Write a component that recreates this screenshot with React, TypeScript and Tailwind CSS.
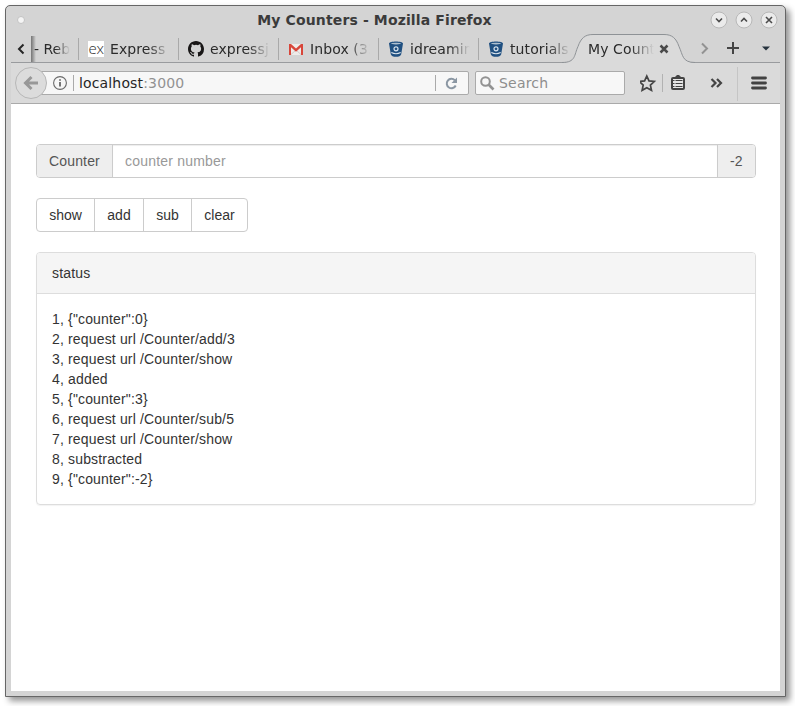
import React from "react";

const LINES = [
  '1, {"counter":0}',
  "2, request url /Counter/add/3",
  "3, request url /Counter/show",
  "4, added",
  '5, {"counter":3}',
  "6, request url /Counter/sub/5",
  "7, request url /Counter/show",
  "8, substracted",
  '9, {"counter":-2}',
];

const FADE =
  "overflow-hidden whitespace-nowrap tracking-[0.1px] [mask-image:linear-gradient(to_right,black_65%,transparent)]";

function WindowButton({ d }: { d: string }) {
  return (
    <svg width="18" height="18" viewBox="0 0 18 18" fill="none">
      <circle cx="9" cy="9" r="8" fill="#ebebeb" stroke="#b8b8b8" />
      <path d={d} stroke="#4a4a4a" strokeWidth="1.6" />
    </svg>
  );
}

function GithubIcon() {
  return (
    <svg width="16" height="16" viewBox="0 0 16 16" fill="#191717">
      <path d="M8 0C3.58 0 0 3.58 0 8c0 3.54 2.29 6.53 5.47 7.59.4.07.55-.17.55-.38 0-.19-.01-.82-.01-1.49-2.01.37-2.53-.49-2.69-.94-.09-.23-.48-.94-.82-1.13-.28-.15-.68-.52-.01-.53.63-.01 1.08.58 1.23.82.72 1.21 1.87.87 2.33.66.07-.52.28-.87.51-1.07-1.78-.2-3.64-.89-3.64-3.95 0-.87.31-1.59.82-2.15-.08-.2-.36-1.02.08-2.12 0 0 .67-.21 2.2.82a7.6 7.6 0 0 1 4 0c1.53-1.04 2.2-.82 2.2-.82.44 1.1.16 1.92.08 2.12.51.56.82 1.27.82 2.15 0 3.07-1.87 3.75-3.65 3.95.29.25.54.73.54 1.48 0 1.07-.01 1.93-.01 2.2 0 .21.15.46.55.38A8.01 8.01 0 0 0 16 8c0-4.42-3.58-8-8-8z" />
    </svg>
  );
}

function GmailIcon() {
  return (
    <svg width="16" height="16" viewBox="0 0 16 16" fill="none">
      <path d="M1 3h14v11H1z" fill="#eeebe9" />
      <path d="M3 13.500L8 9l5 4.500" stroke="#cfcac8" />
      <path d="M1 3h2l5 4.500L13 3h2v11h-2V6.300L8 10.800 3 6.300V14H1z" fill="#d8463a" />
    </svg>
  );
}

function BitbucketIcon() {
  return (
    <svg width="16" height="16" viewBox="0 0 16 16" fill="none">
      <path d="M1 2.500C1 -.2 15 -.2 15 2.500L13.200 13.300c-.4 3.400-10 3.400-10.400 0z" fill="#205081" />
      <ellipse cx="8" cy="2.600" rx="5" ry=".8" fill="#aebfce" />
      <circle cx="8" cy="7.800" r="2" stroke="#d9e3ec" strokeWidth="1.200" />
      <path d="M3.300 11.600q4.700 2.400 9.400 0" stroke="#d9e3ec" strokeWidth="1.100" />
    </svg>
  );
}

function Tab({ icon, label }: { icon: React.ReactNode; label: string }) {
  return (
    <div className="flex h-[22px] w-[100px] shrink-0 items-center border-l border-[#a9a9a9] pl-[9px]">
      <span className="flex size-4 shrink-0">{icon}</span>
      <span className={"ml-1.5 w-[60px] " + FADE}>{label}</span>
    </div>
  );
}

function TitleBar() {
  return (
    <header className="grid h-7 grid-cols-[65px_1fr_65px] items-center">
      <svg className="ml-1.5" width="8" height="8" viewBox="0 0 8 8">
        <circle cx="4" cy="4" r="3.500" fill="#f5f5f5" stroke="#c2c2c2" />
      </svg>
      <h1 className="-ml-[42px] pt-px text-center text-[14px] font-bold tracking-[0.13px] text-[#3b3b3b]">
        My Counters - Mozilla Firefox
      </h1>
      <div className="-ml-[5px] flex gap-[7px]">
        <WindowButton d="M6 7.500l3 3 3-3" />
        <WindowButton d="M6 10.500l3-3 3 3" />
        <WindowButton d="M6 6l6 6M12 6l-6 6" />
      </div>
    </header>
  );
}

function TabBar() {
  return (
    <nav className="flex h-[29px] items-center border-b border-[#999b9e] pt-0.5 text-[14px] text-[#2b2b2b]">
      <div className="flex h-full w-5 shrink-0 items-center justify-center">
        <svg width="8" height="12" viewBox="0 0 8 12" fill="none">
          <path d="M6.500 1.500L2 6l4.500 4.500" stroke="#262626" strokeWidth="2" />
        </svg>
      </div>
      <div className="h-full w-[5px] shrink-0 bg-linear-to-r from-[#747474] to-transparent" />
      <div className="w-[42px] shrink-0">
        <div className="-ml-0.5 w-[36px] whitespace-nowrap [mask-image:linear-gradient(to_right,black_60%,transparent)]">
          - Reb
        </div>
      </div>
      <Tab
        icon={
          <span className="flex size-4 items-center justify-center bg-white pb-0.5 font-['Open_Sans',sans-serif] text-[15px] font-light leading-none tracking-[-0.3px]">
            ex
          </span>
        }
        label="Express"
      />
      <Tab icon={<GithubIcon />} label="expressj" />
      <Tab icon={<GmailIcon />} label="Inbox (33" />
      <Tab icon={<BitbucketIcon />} label="idreamin" />
      <Tab icon={<BitbucketIcon />} label="tutorials" />
      <div className="relative -ml-[16px] -mt-0.5 flex h-[29px] w-[134px] shrink-0 items-center self-start pt-px">
        <svg className="absolute left-0 top-0" width="134" height="30" viewBox="0 0 134 30" fill="none">
          <path
            d="M0 28.500C14 28.500 12 21 16 12.500C19 4 23 .5 31 .5H102C110 .5 114 4 117 12.500C121 21 120 28.500 133 28.500V30H0z"
            fill="#dadada"
          />
          <path
            d="M0 28.500C14 28.500 12 21 16 12.500C19 4 23 .5 31 .5H102C110 .5 114 4 117 12.500C121 21 120 28.500 133 28.500"
            stroke="#8e9296"
          />
        </svg>
        <span className={"relative ml-[26px] w-[66px] " + FADE}>My Count</span>
        <svg className="relative ml-[5px]" width="10" height="10" viewBox="0 0 10 10">
          <path d="M1.500 1.500l7 7M8.500 1.500l-7 7" stroke="#4a4a4a" strokeWidth="2.500" />
        </svg>
      </div>
      <svg className="-mt-0.5 ml-[4px] shrink-0" width="80" height="16" viewBox="700 0 80 16" fill="none">
        <path d="M702 3.500l5 5-5 5" stroke="#929292" strokeWidth="2" />
        <path d="M727 8h12M733 2v12" stroke="#444" strokeWidth="2" />
        <path d="M762 6.500h8l-4 4z" fill="#26333e" />
      </svg>
    </nav>
  );
}

function Toolbar() {
  return (
    <div className="flex h-[41px] items-center border-b border-[#aaa] bg-[#dadada] text-[14px]">
      <div className="relative z-10 ml-1 flex size-8 shrink-0 items-center justify-center rounded-full border border-[#b7b7b7] bg-[#dcdcdc]">
        <svg width="16" height="16" viewBox="0 0 16 16" fill="none">
          <path d="M15 8H3M8.500 2L2.500 8l6 6" stroke="#989898" strokeWidth="3" />
        </svg>
      </div>
      <div className="-ml-2 flex h-6 w-[430px] shrink-0 items-center rounded-r-[2px] border border-[#aaa] bg-[#f7f7f7]">
        <svg className="ml-[13px]" width="14" height="14" viewBox="0 0 14 14" fill="none">
          <circle cx="7" cy="7" r="6.400" stroke="#6a6a6a" strokeWidth="1.100" />
          <path d="M7 6v4.500M7 3.200v1.600" stroke="#555" strokeWidth="1.600" />
        </svg>
        <span className="ml-1.5 h-4 border-l border-[#aaa]" />
        <span className="ml-[5px] tracking-[0.15px] text-[#262626]">
          localhost<span className="text-[#929292]">:3000</span>
        </span>
        <span className="ml-auto h-4 border-l border-[#aaa]" />
        <svg className="ml-[9px] mr-[10px]" width="13" height="13" viewBox="0 0 13 13" fill="none">
          <path d="M10.700 8.500A4.700 4.700 0 1 1 9.800 3.200" stroke="#8b97a3" strokeWidth="2" />
          <path d="M12 .5V6H6.500z" fill="#8b97a3" />
        </svg>
      </div>
      <div className="ml-1.5 flex h-6 w-[150px] shrink-0 items-center rounded-[2px] border border-[#aaa] bg-[#f7f7f7]">
        <svg className="ml-1" width="15" height="15" viewBox="0 0 15 15" fill="none">
          <circle cx="5.500" cy="5.500" r="4.300" stroke="#929292" strokeWidth="2" />
          <path d="M8.500 8.500l5 5" stroke="#929292" strokeWidth="2.600" />
        </svg>
        <span className="ml-1 tracking-[0.200px] text-[#8e8e8e]">Search</span>
      </div>
      <svg className="ml-[15px] shrink-0" width="140" height="40" viewBox="640 0 140 40" fill="none">
        <path
          d="M646.800 13l2.200 4.900 5.300.6-3.900 3.600 1.100 5.200-4.700-2.600-4.700 2.600 1.100-5.200-3.900-3.600 5.300-.6z"
          stroke="#444"
          strokeWidth="1.700"
        />
        <path d="M662.500 11v18" stroke="#b2b2b2" />
        <rect x="672" y="15" width="12" height="11" rx="1" fill="#e6e6e6" stroke="#444" strokeWidth="2" />
        <path d="M674 15l2-2 1-1h2l1 1 2 2z" fill="#444" />
        <path d="M673 17.500h1.500m1 0h7M673 20.500h1.500m1 0h7M673 23.500h1.500m1 0h7" stroke="#444" strokeWidth="1" />
        <path d="M711.500 16l4 4-4 4M717 16l4 4-4 4" stroke="#444" strokeWidth="2.200" />
        <path d="M737.500 4v34" stroke="#c5c5c5" />
        <path d="M752.500 15h13M752.500 20h13M752.500 25h13" stroke="#424242" strokeWidth="2.800" strokeLinecap="round" />
      </svg>
    </div>
  );
}

export default function App() {
  return (
    <div className="h-[706px] w-[795px] overflow-hidden bg-white pl-[5px] pt-[5px] font-['DejaVu_Sans',sans-serif]">
      <div className="flex h-[692px] w-[781px] flex-col rounded-t-[5px] border border-[#666] bg-[#d4d4d4] px-[5px] pb-[5px] shadow-[4px_4px_6px_rgba(0,0,0,0.42)]">
        <TitleBar />
        <TabBar />
        <Toolbar />
        <main className="flex-1 bg-white px-[25px] pt-10 font-['Liberation_Sans',sans-serif] text-[14px] leading-5 tracking-[0.16px] text-[#333]">
          <div className="flex h-[34px] w-[720px] overflow-hidden rounded-[4px] border border-[#ccc]">
            <label className="flex w-[76px] items-center border-r border-[#ccc] bg-[#eee] pl-3 text-[#555]">Counter</label>
            <input
              className="min-w-0 flex-1 px-3 tracking-[0.2px] shadow-[inset_0_1px_1px_rgba(0,0,0,0.075)] outline-none placeholder:text-[#999]"
              placeholder="counter number"
            />
            <span className="flex w-[38px] items-center border-l border-[#ccc] bg-[#eee] pl-3 text-[#555]">-2</span>
          </div>
          <div className="mt-5 flex h-[34px] w-[212px] rounded-[4px] border border-[#ccc] tracking-normal">
            <button className="w-[58px] border-r border-[#ccc]">show</button>
            <button className="w-[49px] border-r border-[#ccc]">add</button>
            <button className="w-[48px] border-r border-[#ccc]">sub</button>
            <button className="flex-1">clear</button>
          </div>
          <section className="mt-5 h-[253px] w-[720px] overflow-hidden rounded-[4px] border border-[#ddd] shadow-[0_1px_1px_rgba(0,0,0,0.05)]">
            <h2 className="h-[41px] border-b border-[#ddd] bg-[#f5f5f5] px-[15px] py-2.5">status</h2>
            <div className="p-[15px]">
              {LINES.map((line) => (
                <p key={line}>{line}</p>
              ))}
            </div>
          </section>
        </main>
      </div>
    </div>
  );
}
